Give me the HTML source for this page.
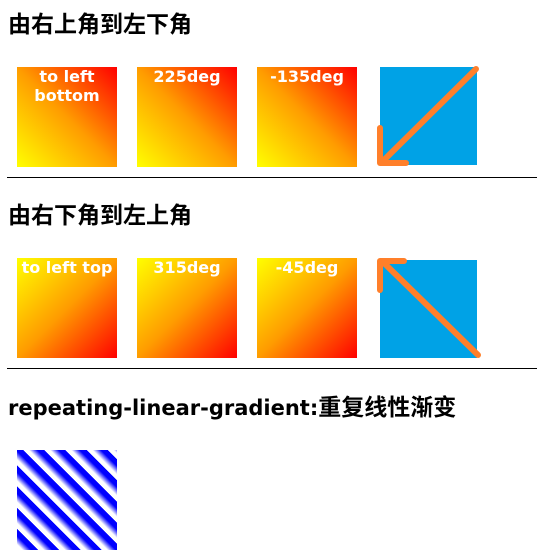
<!DOCTYPE html>
<html><head><meta charset="utf-8"><style>
body{margin:0;width:537px;height:557px;background:#fff;position:relative;overflow:hidden;font-family:"Liberation Sans","Noto Sans CJK SC",sans-serif;}
h3{position:absolute;left:8px;margin:0;font-size:23px;font-weight:bold;color:#000;line-height:26px;white-space:nowrap;}
.lat{font-family:"DejaVu Sans",sans-serif;font-size:21px;}
.b{position:absolute;width:100px;height:100px;color:#fff;font-weight:bold;font-size:16px;text-align:center;line-height:19px;font-family:"DejaVu Sans",sans-serif;white-space:nowrap;}
.r1{background:linear-gradient(to left bottom,#ff0000,#ff9c00 50%,#ffff00);top:67px;}
.r2{background:linear-gradient(to left top,#ff0000,#ff9c00 50%,#ffff00);top:258px;}
.hr{position:absolute;left:7px;width:530px;height:1px;background:#000;}
.blue{position:absolute;left:380px;width:97px;height:98px;background:#00a2e6;}
</style></head><body>
<h3 style="top:11px">由右上角到左下角</h3>
<div class="b r1" style="left:17px">to left<br>bottom</div>
<div class="b r1" style="left:137px">225deg</div>
<div class="b r1" style="left:257px">-135deg</div>
<div class="blue" style="top:67px"></div>
<div class="hr" style="top:177px"></div>
<h3 style="top:202px">由右下角到左上角</h3>
<div class="b r2" style="left:17px">to left top</div>
<div class="b r2" style="left:137px">315deg</div>
<div class="b r2" style="left:257px">-45deg</div>
<div class="blue" style="top:260px"></div>
<svg style="position:absolute;left:0;top:0" width="537" height="557">
<g stroke="#ff7f2a" stroke-width="6" stroke-linecap="round" fill="none" stroke-linejoin="round">
<path d="M476 69 L383 161"/>
<path d="M380 128 L380 163 L406 163"/>
<path d="M478 355 L383 262"/>
<path d="M380 290 L380 261 L404 261"/>
</g></svg>
<div class="hr" style="top:368px"></div>
<h3 style="top:394px"><span class="lat">repeating-linear-gradient:</span>重复线性渐变</h3>
<div style="position:absolute;left:17px;top:450px;width:100px;height:100px;background:repeating-linear-gradient(45deg,#fff 0,#fff 4px,#00f 10px,#00f 15px);"></div>
</body></html>
